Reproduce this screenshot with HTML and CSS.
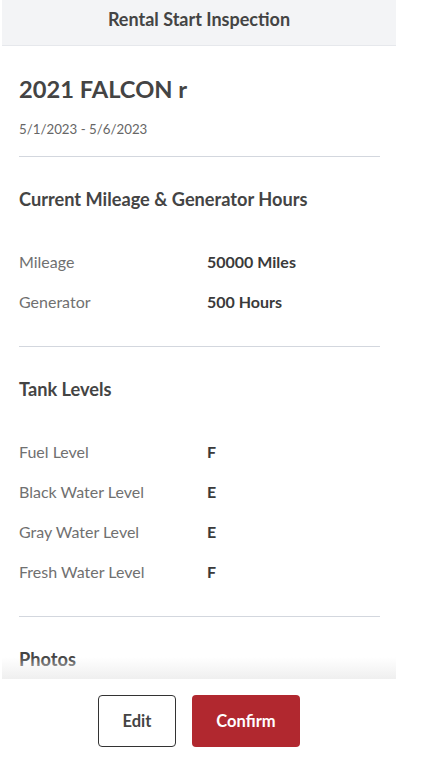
FILE: index.html
```html
<!DOCTYPE html>
<html lang="en">
<head>
<meta charset="utf-8">
<title>Rental Start Inspection</title>
<link rel="stylesheet" href="styles.css">
</head>
<body>
<div class="app">
  <header class="topbar">Rental Start Inspection</header>
  <main class="content">
    <section class="intro">
      <h1 class="title">2021 FALCON r</h1>
      <p class="dates">5/1/2023 - 5/6/2023</p>
    </section>
    <section class="section">
      <h2 class="section-title">Current Mileage &amp; Generator Hours</h2>
      <div class="rows">
        <div class="row"><span class="label">Mileage</span><span class="value">50000 Miles</span></div>
        <div class="row"><span class="label">Generator</span><span class="value">500 Hours</span></div>
      </div>
    </section>
    <section class="section">
      <h2 class="section-title">Tank Levels</h2>
      <div class="rows">
        <div class="row"><span class="label">Fuel Level</span><span class="value">F</span></div>
        <div class="row"><span class="label">Black Water Level</span><span class="value">E</span></div>
        <div class="row"><span class="label">Gray Water Level</span><span class="value">E</span></div>
        <div class="row"><span class="label">Fresh Water Level</span><span class="value">F</span></div>
      </div>
    </section>
    <section class="section">
      <h2 class="section-title">Photos</h2>
    </section>
    <div class="fade"></div>
  </main>
  <footer class="actions">
    <button class="btn btn-outline" type="button">Edit</button>
    <button class="btn btn-primary" type="button">Confirm</button>
  </footer>
</div>
</body>
</html>
```
FILE: styles.css
```css
* { box-sizing: border-box; }
html, body { margin: 0; padding: 0; background: #fff; }
body {
  font-family: Lato, "Noto Sans", "Liberation Sans", sans-serif;
  color: #444;
  height: 769px;
  overflow: hidden;
}
.app {
  width: 394px;
  margin-left: 2px;
  height: 769px;
  display: flex;
  flex-direction: column;
}
.topbar {
  height: 46px;
  flex: none;
  background: #f3f4f6;
  border-bottom: 1px solid #e6e8ec;
  text-align: center;
  padding-top: 7px;
  font-size: 18px;
  line-height: 24px;
  font-weight: 700;
  color: #444;
}
.content {
  position: relative;
  flex: 1;
  overflow: hidden;
  padding: 0 16px 0 17px;
}
.intro {
  padding-top: 29px;
  padding-bottom: 19px;
  border-bottom: 1px solid #d3d7de;
}
.title {
  margin: 0;
  font-size: 23.7px;
  line-height: 28px;
  font-weight: 700;
  color: #444;
}
.dates {
  margin: 18px 0 0;
  font-size: 13.3px;
  line-height: 16px;
  color: #666;
}
.section {
  padding-top: 30px;
  padding-bottom: 25px;
  border-bottom: 1px solid #d3d7de;
}
.section:last-of-type { border-bottom: none; }
.section-title {
  margin: 0;
  font-size: 18.2px;
  line-height: 24px;
  font-weight: 700;
  color: #444;
}
.rows {
  margin-top: 30px;
  display: flex;
  flex-direction: column;
}
.row {
  display: grid;
  grid-template-columns: 188px 1fr;
  height: 40px;
  align-items: center;
  font-size: 16px;
}
.label { color: #707070; }
.value { color: #3a3a3a; font-weight: 700; }
.fade {
  position: absolute;
  left: 0;
  right: 0;
  bottom: 0;
  height: 22px;
  background: linear-gradient(to bottom, rgba(240,240,240,0), #efefef);
}
.actions {
  flex: none;
  height: 90px;
  background: #fff;
  display: flex;
  justify-content: center;
  align-items: flex-start;
  gap: 16px;
  padding-top: 16px;
}
.btn {
  height: 52px;
  border-radius: 4px;
  font-family: Lato, "Noto Sans", "Liberation Sans", sans-serif;
  font-size: 16.5px;
  font-weight: 700;
  cursor: pointer;
}
.btn-outline {
  width: 78px;
  background: #fff;
  color: #444;
  border: 1px solid #333;
}
.btn-primary {
  width: 108px;
  background: #b1282f;
  color: #fff;
  border: none;
}
```
